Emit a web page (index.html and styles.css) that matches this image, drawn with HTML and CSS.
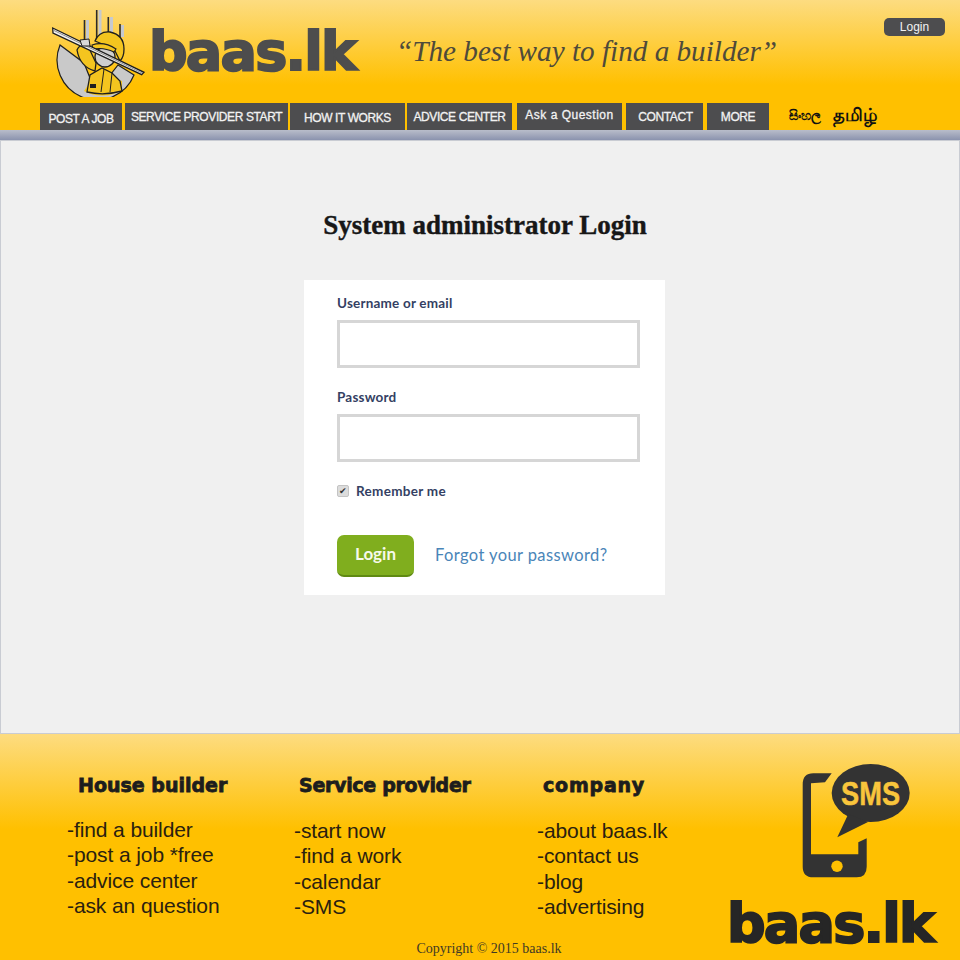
FILE: index.html
```html
<!DOCTYPE html>
<html lang="en">
<head>
  <meta charset="UTF-8">
  <title>baas.lk - System administrator Login</title>
  <link rel="stylesheet" href="styles.css">
</head>
<body>

<header class="site-header">
  <a class="top-login" href="#">Login</a>
  <div class="brand-row">
    <svg class="brand-icon" viewBox="52 4 94 90" width="94" height="90" aria-hidden="true">
      <path d="M60 42 A38 38 0 0 0 134 72 L118 62 L96 90 L84 60 Z" fill="#c9c9c9" stroke="#1f1f1f" stroke-width="1.2"/>
      <path d="M84 88 A38 38 0 0 0 122 87 L122 78 L96 70 Z" fill="#f4c51f"/>
      <g stroke="#c6c9cf" stroke-width="3">
        <path d="M87.5 17 V38"/>
        <path d="M100 7 V32"/>
        <path d="M111.5 14 V30"/>
        <path d="M122.5 22 V34"/>
      </g>
      <g stroke="#2b2b2b" stroke-width="1.6">
        <path d="M84.5 17 V38"/>
        <path d="M96.7 7 V36"/>
        <path d="M108.3 14 V30"/>
        <path d="M120 21 V34"/>
      </g>
      <path d="M87 89 L90 72 L102 65 L112 70 L120 78 L122 88 Q104 93 87 89 Z" fill="#f4c51f" stroke="#1f1f1f" stroke-width="1.3"/>
      <path d="M104 66 L101 89 M112 70 L110 89" fill="none" stroke="#1f1f1f" stroke-width="1"/>
      <path d="M77 47 Q80 40 88 43 L96 60 L95 68 Q80 64 77 47 Z" fill="#f4c51f" stroke="#1f1f1f" stroke-width="1.3"/>
      <path d="M95 38 Q99 28 110 29 Q124 32 124 46 Q124 54 120 58 L114 46 Z" fill="#f4c51f" stroke="#1f1f1f" stroke-width="1.3"/>
      <circle cx="105" cy="54" r="10" fill="#cfcfcf" stroke="#1f1f1f" stroke-width="1.3"/>
      <path d="M92 42 Q104 38 116 46 L114 49 Q104 44 93 46 Z" fill="#f4c51f" stroke="#1f1f1f" stroke-width="1.1"/>
      <path d="M52.700 25 L144 69.300 L141.700 71.700 L53 30 Z" fill="#f3f3f3" stroke="#1f1f1f" stroke-width="1.3"/>
      <path d="M54 27.500 L142 70" fill="none" stroke="#777" stroke-width="0.8"/>
      <path d="M80 37 L89 36 L90 43 L82 43 Z" fill="#d8d8d8" stroke="#1f1f1f" stroke-width="1"/>
      <rect x="90" y="81" width="6" height="4" fill="#1f1f1f"/>
    </svg>
    <div class="wordmark">baas.lk</div>
    <div class="tagline">“The best way to find a builder”</div>
  </div>
  <nav class="main-nav">
    <a class="tab tab-post" href="#">POST A JOB</a>
    <a class="tab tab-service" href="#">SERVICE PROVIDER START</a>
    <a class="tab tab-how" href="#">HOW IT WORKS</a>
    <a class="tab tab-advice" href="#">ADVICE CENTER</a>
    <a class="tab tab-ask" href="#">Ask a Question</a>
    <a class="tab tab-contact" href="#">CONTACT</a>
    <a class="tab tab-more" href="#">MORE</a>
    <a class="lang lang-si" href="#" lang="si">සිංහල</a>
    <a class="lang lang-ta" href="#" lang="ta">தமிழ்</a>
  </nav>
</header>
<div class="header-band"></div>

<main class="content">
  <h1 class="page-title">System administrator Login</h1>
  <form class="login-card">
    <label class="field-label" for="user">Username or email</label>
    <input class="field-input" id="user" type="text">
    <label class="field-label field-label-second" for="pass">Password</label>
    <input class="field-input" id="pass" type="password">
    <label class="remember"><input type="checkbox" checked> Remember me</label>
    <div class="form-actions">
      <button class="login-btn" type="button">Login</button>
      <a class="forgot" href="#">Forgot your password?</a>
    </div>
  </form>
</main>

<footer class="site-footer">
  <div class="footer-left">
    <div class="footer-cols">
      <div class="footer-col col-house">
        <h3>House builder</h3>
        <ul>
          <li>-find a builder</li>
          <li>-post a job *free</li>
          <li>-advice center</li>
          <li>-ask an question</li>
        </ul>
      </div>
      <div class="footer-col col-service">
        <h3>Service provider</h3>
        <ul>
          <li>-start now</li>
          <li>-find a work</li>
          <li>-calendar</li>
          <li>-SMS</li>
        </ul>
      </div>
      <div class="footer-col col-company">
        <h3>company</h3>
        <ul>
          <li>-about baas.lk</li>
          <li>-contact us</li>
          <li>-blog</li>
          <li>-advertising</li>
        </ul>
      </div>
    </div>
    <div class="copyright">Copyright © 2015 baas.lk</div>
  </div>
  <div class="footer-right">
    <div class="sms-icon">
      <svg viewBox="0 0 108 114" width="108" height="114" aria-hidden="true">
        <path d="M29.7 9.3 H11.3 Q0.7 9.3 0.7 20.3 V102.7 Q0.7 113.3 11.3 113.3 H54.7 Q64.7 113.3 64.7 102.7 V74.3 L56.3 78.3 V90.3 H9 V19.3 L23 18.3 Z" fill="#333333"/>
        <circle cx="35" cy="102.3" r="5.7" fill="#ffc000"/>
        <ellipse cx="68.7" cy="29" rx="39" ry="29" fill="#333333"/>
        <path d="M46.3 50 L35.3 73.3 L66 58 Z" fill="#333333"/>
      </svg>
      <span class="sms-text">SMS</span>
    </div>
    <div class="wordmark wordmark-footer">baas.lk</div>
  </div>
</footer>

</body>
</html>
```

FILE: styles.css
```css
html, body {
  margin: 0;
  padding: 0;
  background: #f0f0f0;
  font-family: "Liberation Sans", Arial, sans-serif;
}

a {
  text-decoration: none;
}

/* header */
.site-header {
  position: relative;
  height: 130px;
  background: linear-gradient(#fddc80 0, #ffc000 85px);
}

.top-login {
  position: absolute;
  top: 18px;
  right: 15px;
  width: 61px;
  height: 18px;
  line-height: 18px;
  text-align: center;
  font-size: 12px;
  color: #f2f2f2;
  background: #4d4d4f;
  border-radius: 5px;
}

.brand-row {
  display: flex;
  align-items: center;
  height: 103px;
  padding-left: 52px;
}

.brand-icon {
  flex: none;
  margin-right: 3px;
}

.wordmark {
  width: 247px;
  font-family: "DejaVu Sans", sans-serif;
  font-weight: bold;
  font-size: 54px;
  line-height: 60px;
  letter-spacing: -1.800px;
  color: #4d4d4d;
  -webkit-text-stroke: 2px #4d4d4d;
}

.tagline {
  font-family: "Liberation Serif", serif;
  font-style: italic;
  font-size: 29.200px;
  color: #4f4a3a;
}

.main-nav {
  display: flex;
  align-items: flex-end;
  height: 27px;
  padding-left: 40px;
}

.tab {
  display: block;
  box-sizing: border-box;
  height: 27px;
  line-height: 29px;
  text-align: center;
  font-size: 12px;
  color: #f2f2f2;
  background: #4d4d4f;
  letter-spacing: -0.400px;
  -webkit-text-stroke: 0.300px #f2f2f2;
}

.tab-post { width: 82px; line-height: 33px; }
.tab-service { width: 163px; margin-left: 3px; }
.tab-how { width: 115px; margin-left: 2px; line-height: 31px; }
.tab-advice { width: 105px; margin-left: 2px; }
.tab-ask { width: 105px; margin-left: 5px; line-height: 25px; letter-spacing: 0.500px; }
.tab-contact { width: 77px; margin-left: 4px; padding-left: 2px; }
.tab-more { width: 62px; margin-left: 4px; }

.lang {
  align-self: center;
  color: #111;
  font-family: "Noto Sans", "DejaVu Sans", sans-serif;
  font-weight: bold;
  position: relative;
  top: -2px;
}

.lang-si { margin-left: 20px; font-size: 13px; }
.lang-ta { margin-left: 12px; font-size: 18px; }

.header-band {
  height: 10px;
  background: linear-gradient(#b9bdca, #8b93ae);
}

/* login */
.content {
  box-sizing: border-box;
  height: 594px;
  padding-top: 69px;
  background: #f0f0f0;
  border: 1px solid #c9ccd3;
}

.page-title {
  margin: 0 0 40px;
  padding-left: 10px;
  height: 30px;
  line-height: 30px;
  text-align: center;
  font-family: "Liberation Serif", serif;
  font-weight: bold;
  font-size: 27px;
  color: #171717;
  -webkit-text-stroke: 0.400px #171717;
}

.login-card {
  box-sizing: border-box;
  width: 361px;
  height: 315px;
  margin-left: 303px;
  padding: 15px 25px 0 33px;
  background: #fff;
}

.field-label {
  display: block;
  height: 17px;
  line-height: 17px;
  margin-bottom: 8px;
  font-family: "Lato", sans-serif;
  font-weight: bold;
  font-size: 13.500px;
  letter-spacing: 0.200px;
  color: #343f63;
}

.field-label-second {
  margin-top: 21px;
}

.field-input {
  display: block;
  box-sizing: border-box;
  width: 303px;
  height: 48px;
  border: 3px solid #d6d6d6;
  background: #fff;
  outline: none;
}

.remember {
  display: flex;
  align-items: center;
  gap: 7px;
  margin-top: 20px;
  height: 18px;
  font-family: "Lato", sans-serif;
  font-weight: bold;
  font-size: 13.500px;
  letter-spacing: 0.300px;
  color: #343f63;
}

.remember input {
  appearance: none;
  position: relative;
  width: 12px;
  height: 12px;
  margin: 0;
  background: #dcdcdc;
  border: 1px solid #c4c4c4;
  border-radius: 2px;
}

.remember input::after {
  content: "✔";
  position: absolute;
  top: -1px;
  left: 1px;
  font-size: 9px;
  line-height: 12px;
  color: #333;
}

.form-actions {
  display: flex;
  align-items: center;
  gap: 21px;
  margin-top: 35px;
}

.login-btn {
  box-sizing: border-box;
  width: 77px;
  height: 42px;
  padding: 0 0 3px;
  border: 0;
  border-bottom: 2px solid #5f8a12;
  border-radius: 7px;
  background: #80ae1e;
  color: #f6f9ea;
  font-family: "Lato", sans-serif;
  font-weight: bold;
  font-size: 17px;
}

.forgot {
  padding-bottom: 2px;
  font-family: "Lato", sans-serif;
  font-size: 16.500px;
  letter-spacing: 0.400px;
  color: #4a85b8;
}

/* footer */
.site-footer {
  display: flex;
  height: 226px;
  background: linear-gradient(#fddc80 0, #ffc000 95px);
}

.footer-left {
  flex: none;
  width: 730px;
}

.footer-cols {
  display: flex;
  height: 206px;
  padding: 38px 0 0 67px;
  box-sizing: border-box;
}

.footer-col h3 {
  margin: 0 0 20px;
  height: 26px;
  line-height: 26px;
  font-family: "DejaVu Sans", sans-serif;
  font-weight: bold;
  font-size: 19px;
  color: #1d1d1d;
  -webkit-text-stroke: 0.800px #1d1d1d;
}

.footer-col ul {
  margin: 0;
  padding: 0;
  list-style: none;
  font-size: 21px;
  line-height: 25.300px;
  letter-spacing: -0.100px;
  color: #2a2110;
}

.col-house { width: 227px; }
.col-house h3 { margin-left: 11px; margin-bottom: 19px; }
.col-service { width: 243px; }
.col-service h3 { margin-left: 5px; letter-spacing: -0.300px; }
.col-company h3 { margin-left: 6px; letter-spacing: 0.800px; }

.copyright {
  padding-left: 248px;
  text-align: center;
  font-family: "Liberation Serif", serif;
  font-size: 14px;
  color: #3f3a25;
  margin-top: 1px;
}

.footer-right {
  display: flex;
  flex-direction: column;
  padding-top: 30px;
}

.sms-icon {
  position: relative;
  width: 108px;
  height: 114px;
  margin-left: 72px;
}

.sms-icon svg {
  display: block;
}

/* sits on the speech bubble */
.sms-text {
  position: absolute;
  top: 9px;
  left: 33px;
  width: 61px;
  text-align: center;
  font-size: 34px;
  line-height: 40px;
  font-weight: bold;
  color: #f9c53c;
  transform: scaleX(0.800);
  -webkit-text-stroke: 0.500px #f9c53c;
}

.wordmark-footer {
  margin-top: 16px;
  margin-left: -3px;
  color: #262626;
  -webkit-text-stroke: 2px #262626;
}
```
